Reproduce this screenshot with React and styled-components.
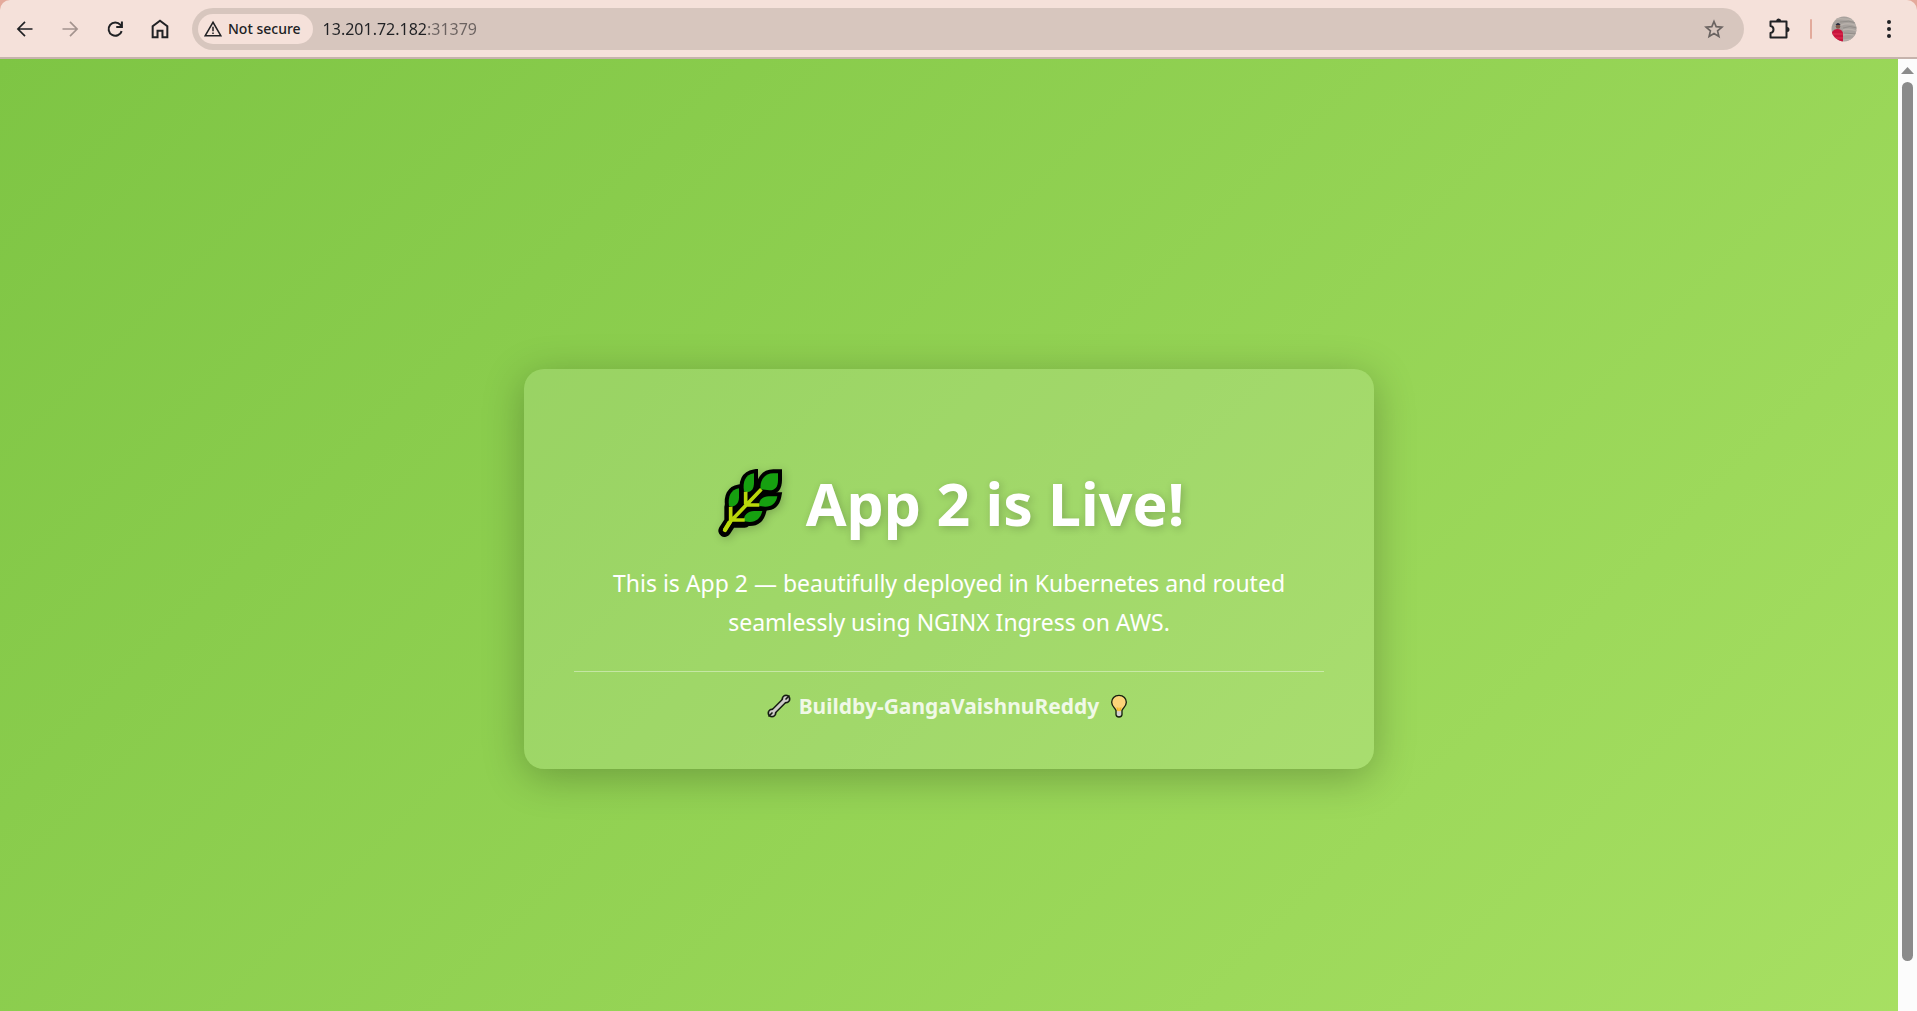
import React from "react";
import styled, { createGlobalStyle } from "styled-components";

const GlobalStyle = createGlobalStyle`
  *, *::before, *::after { box-sizing: border-box; }
  body { margin: 0; background: #e4aa9c; }
`;

const uiFont = `"Segoe UI", "Noto Sans", "Open Sans", sans-serif`;

const Window = styled.div`
  display: flex;
  flex-direction: column;
  height: 100vh;
  font-family: ${uiFont};
`;

const Toolbar = styled.header`
  display: flex;
  align-items: center;
  padding: 8px 6px 7px 2px;
  background: #f5e1da;
  border-radius: 10px 10px 0 0;
`;

const ToolButton = styled.button`
  display: flex;
  align-items: center;
  justify-content: center;
  width: 45px;
  height: 42px;
  padding: 0;
  border: 0;
  background: none;
  color: ${(p) => (p.$muted ? "#a3938e" : "#202124")};
`;

const AddressBar = styled.div`
  display: flex;
  flex: 1;
  align-items: center;
  height: 42px;
  margin: 0 12px 0 10px;
  padding: 0 8px 0 6px;
  border-radius: 21px;
  background: #d7c6be;
`;

const SecurityChip = styled.button`
  display: flex;
  align-items: center;
  gap: 6px;
  height: 30px;
  padding: 0 12px 0 6px;
  border: 0;
  border-radius: 15px;
  background: #f5e1da;
  color: #202124;
  font: 500 14px/20px ${uiFont};
  white-space: nowrap;
`;

const AddressInput = styled.input`
  flex: 1;
  min-width: 0;
  height: 30px;
  margin-left: 10px;
  padding: 0;
  border: 0;
  outline: 0;
  background: linear-gradient(90deg, #202124 105px, #6b6260 105px);
  background-clip: text;
  -webkit-text-fill-color: transparent;
  font: 400 16px/24px ${uiFont};
`;

const Separator = styled.span`
  width: 2px;
  height: 20px;
  margin: 0 9px;
  border-radius: 1px;
  background: #e2aa9b;
`;

const Viewport = styled.div`
  display: flex;
  flex: 1;
  min-height: 0;
  border-top: 2px solid #c6b3ac;
`;

const Page = styled.main`
  flex: 1;
  min-width: 0;
  overflow: hidden;
`;

const Stage = styled.div`
  display: flex;
  align-items: center;
  justify-content: center;
  min-height: calc(100% + 68px);
  padding: 0 20px;
  background: linear-gradient(135deg, #7ec544, #a8e063);
`;

const Card = styled.section`
  width: 100%;
  max-width: 850px;
  padding: 50px;
  border-radius: 20px;
  background: rgba(255, 255, 255, 0.13);
  box-shadow: 0 8px 40px rgba(0, 0, 0, 0.25);
  color: #fff;
  text-align: center;
`;

const Title = styled.h1`
  display: flex;
  align-items: center;
  justify-content: center;
  gap: 20px;
  margin: 44px 0 21px;
  font-size: 59px;
  line-height: 80px;
  font-weight: 700;
  text-shadow: 2px 2px 8px rgba(0, 0, 0, 0.2);

  svg { filter: drop-shadow(2px 2px 4px rgba(0, 0, 0, 0.2)); }
`;

const Message = styled.p`
  margin: 0 0 29px;
  padding: 0 30px;
  font-size: 23px;
  line-height: 39px;
`;

const Credit = styled.footer`
  display: flex;
  align-items: center;
  justify-content: center;
  gap: 8px;
  padding-top: 21px;
  border-top: 1px solid rgba(255, 255, 255, 0.4);
  font-size: 21px;
  line-height: 26px;
  font-weight: 700;
  color: rgba(255, 255, 255, 0.85);
`;

const ScrollTrack = styled.aside`
  display: flex;
  flex-direction: column;
  align-items: center;
  width: 19px;
  padding: 8px 0 50px;
  gap: 8px;
  background: #fcfcfc;
`;

const ScrollThumb = styled.span`
  flex: 1;
  width: 11px;
  border-radius: 6px;
  background: #8b8b8b;
`;

const Line = ({ size = 24, width = 2, children }) => (
  <svg width={size} height={size} viewBox="0 0 24 24" fill="none" stroke="currentColor" strokeWidth={width} aria-hidden="true">
    {children}
  </svg>
);

const leafShapes = [
  "M240 70V90C240 110 232 121 214 121L188 118C184 92 200 70 226 70Z",
  "M168 70V97C168 116 162 124 148 127L138 124C133 96 142 74 168 70Z",
  "M123 115V142C123 158 115 167 103 170L93 168C89 140 98 119 123 115Z",
  "M238 139C234 160 222 170 202 170L184 168C181 150 195 139 212 139Z",
  "M193 183C188 204 175 216 155 216L138 214C135 196 150 183 168 183Z",
];
const stemShape = "M190 118L98 214L80 240M143 125V163M98 170V213M184 165H146M140 210H100";

const Leaf = () => (
  <svg width="72" height="68" viewBox="48 57 216 204" role="img" aria-label="leaf">
    <g fill="#000" stroke="#000" strokeWidth="24">
      {leafShapes.map((d) => <path key={d} d={d} />)}
      <path d="M98 170V214L80 242M143 125V165L190 118M184 168H140L98 214H140" strokeWidth="38" strokeLinecap="round" strokeLinejoin="round" />
    </g>
    <g fill="#16a010">
      {leafShapes.map((d) => <path key={d} d={d} />)}
    </g>
    <path d={stemShape} fill="none" stroke="#bad80a" strokeWidth="11" strokeLinejoin="round" />
    <path d="M94 218L81 240" stroke="#bad80a" strokeWidth="13" strokeLinecap="round" />
  </svg>
);

const Wrench = () => (
  <svg width="24" height="24" viewBox="0 0 72 72" role="img" aria-label="wrench">
    <g fill="#151a12" stroke="#151a12">
      <circle cx="57" cy="15" r="13" />
      <circle cx="15" cy="57" r="13" />
      <path d="M55 17L17 55" strokeWidth="18" />
    </g>
    <g fill="#cdccc8" stroke="#cdccc8">
      <circle cx="57" cy="15" r="8" />
      <circle cx="15" cy="57" r="8" />
      <path d="M55 17L17 55" strokeWidth="9" />
    </g>
    <path d="M57 15L66 6M15 57L6 66" stroke="#151a12" strokeWidth="5" strokeLinecap="round" />
  </svg>
);

const Bulb = () => (
  <svg width="24" height="24" viewBox="0 0 72 72" role="img" aria-label="light bulb">
    <path d="M28 51H44V62Q44 68 36 68Q28 68 28 62Z" fill="#d0cfce" />
    <path d="M36 4C22 4 14 14 14 25C14 36 22 40 28 49V52H44V49C50 40 58 36 58 25C58 14 50 4 36 4Z" fill="#fcd479" />
    <path d="M30 40L33 51M42 40L39 51M36 41V51" stroke="#f1b31c" strokeWidth="3" />
    <path d="M36 4C22 4 14 14 14 25C14 36 22 40 27 49V62Q28 69 36 69Q44 69 45 62V49C50 40 58 36 58 25C58 14 50 4 36 4Z" fill="none" stroke="#17200f" strokeWidth="4" />
  </svg>
);

const Avatar = () => (
  <svg width="26" height="26" viewBox="0 0 26 26" aria-hidden="true">
    <clipPath id="face"><circle cx="13" cy="13" r="12.5" /></clipPath>
    <g clipPath="url(#face)">
      <rect width="26" height="26" fill="#a7a19d" />
      <path d="M0 4Q10 1 26 5M10 9Q18 6 26 10M12 14Q18 12 26 15M12 19Q19 17 26 20M12 24L24 23" stroke="#b8b1ab" strokeWidth="1.4" fill="none" />
      <path d="M9 6Q18 4 26 7M12 12Q19 9 26 12M13 17L26 18" stroke="#938e8a" fill="none" />
      <path d="M1 16Q3 13 6 13Q11 13 12 17V26H1Z" fill="#c8143c" />
      <path d="M1 18H12M2 22H12" stroke="#e23355" />
      <circle cx="7" cy="10.500" r="2.300" fill="#80594b" />
      <path d="M4.500 9Q7 5 9.500 9Z" fill="#27283c" />
    </g>
  </svg>
);

export default function App() {
  return (
    <Window>
      <GlobalStyle />
      <Toolbar>
        <ToolButton aria-label="Back">
          <Line size={20}><path d="M21 12H4M12 3.500L3.500 12L12 20.500" /></Line>
        </ToolButton>
        <ToolButton aria-label="Forward" $muted>
          <Line size={20}><path d="M3 12H20M12 3.500L20.500 12L12 20.500" /></Line>
        </ToolButton>
        <ToolButton aria-label="Reload">
          <Line size={20} width={2.4}><path d="M20 14.500A8 8 0 1 1 18.500 7L20 9M20.300 3V9.500H13.500" /></Line>
        </ToolButton>
        <ToolButton aria-label="Home">
          <Line size={22} width={2.2}><path d="M4 21V9L12 3L20 9V21H14.700V14H9.300V21Z" /></Line>
        </ToolButton>
        <AddressBar>
          <SecurityChip>
            <Line size={18} width={2}>
              <path d="M12 3L22.500 21H1.500ZM12 9V15M12 16.500V18.800" />
            </Line>
            Not secure
          </SecurityChip>
          <AddressInput aria-label="Address" defaultValue="13.201.72.182:31379" />
          <ToolButton aria-label="Bookmark this page">
            <svg width="20" height="20" viewBox="0 0 24 24" fill="none" stroke="#6a6361" strokeWidth="2" aria-hidden="true">
              <path d="M12 3L14.600 9.200L21.500 9.800L16.300 14.300L17.900 21L12 17.400L6.100 21L7.700 14.300L2.500 9.800L9.400 9.200Z" />
            </svg>
          </ToolButton>
        </AddressBar>
        <ToolButton aria-label="Extensions">
          <Line size={24} width={2}>
            <path d="M3.500 4.500H19.500V20.500H3.500V16Q6.500 15.500 6.500 12.500Q6.500 9.500 3.500 9Z" strokeLinejoin="round" />
            <path d="M9.200 4A2.500 2.500 0 0 1 14.200 4ZM20 10A2.500 2.500 0 0 1 20 15Z" fill="currentColor" stroke="none" />
          </Line>
        </ToolButton>
        <Separator />
        <ToolButton aria-label="Profile"><Avatar /></ToolButton>
        <ToolButton aria-label="Menu">
          <svg width="20" height="20" viewBox="0 0 20 20" fill="currentColor" aria-hidden="true">
            <circle cx="10" cy="3" r="2" /><circle cx="10" cy="10" r="2" /><circle cx="10" cy="17" r="2" />
          </svg>
        </ToolButton>
      </Toolbar>
      <Viewport>
        <Page>
          <Stage>
            <Card>
              <Title><Leaf />App 2 is Live!</Title>
              <Message>
                This is App 2 — beautifully deployed in Kubernetes and routed seamlessly using NGINX Ingress on AWS.
              </Message>
              <Credit><Wrench />Buildby-GangaVaishnuReddy<Bulb /></Credit>
            </Card>
          </Stage>
        </Page>
        <ScrollTrack aria-hidden="true">
          <svg width="13" height="7" viewBox="0 0 13 7" fill="#8b8b8b"><path d="M6.500 0L13 7H0Z" /></svg>
          <ScrollThumb />
        </ScrollTrack>
      </Viewport>
    </Window>
  );
}
